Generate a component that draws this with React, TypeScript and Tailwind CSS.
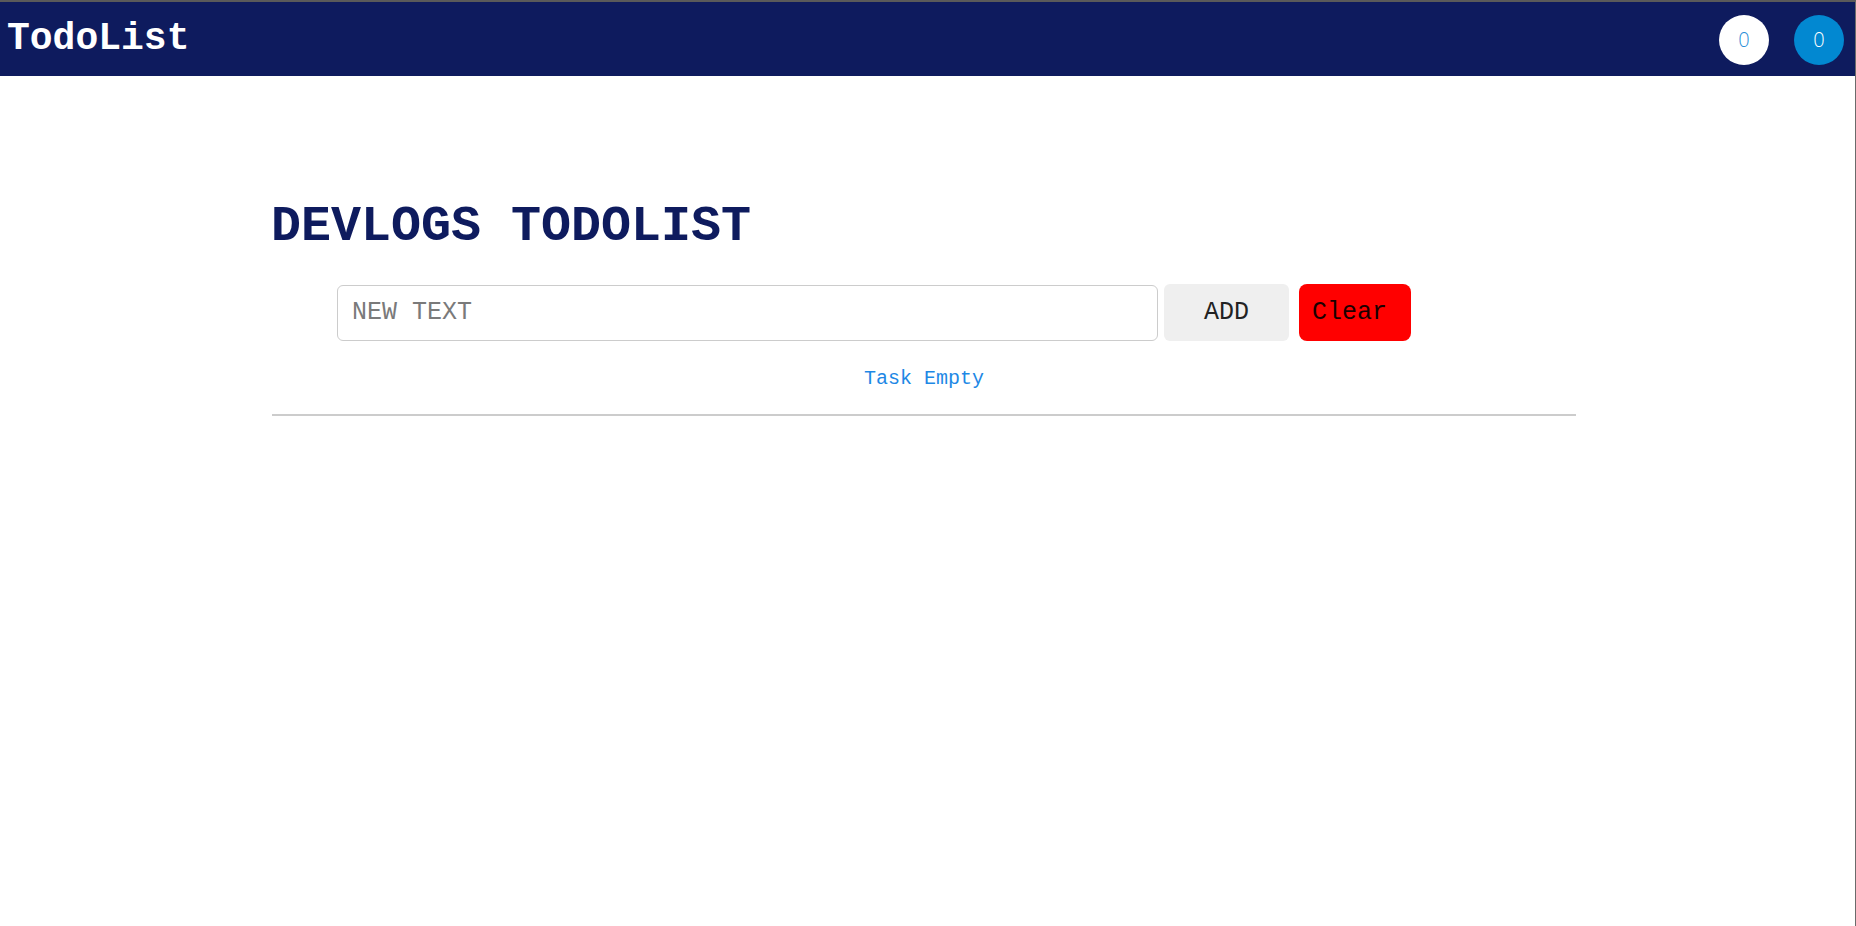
import { JSX, useState } from "react";

const mono = "font-['Courier_New','Liberation_Mono',monospace]";

export default function App(): JSX.Element {
  const [text, setText] = useState<string>("");
  const [tasks, setTasks] = useState<string[]>([]);
  const done = 0;

  const handleAdd = () => {
    if (!text.trim()) return;
    setTasks([...tasks, text.trim()]);
    setText("");
  };

  return (
    <div className="min-h-screen bg-white border-t-2 border-t-[#5a5a5a] border-r border-r-[#6b6b6b]">
      {/* 상단 네비게이션 */}
      <nav className="h-[74px] bg-[#0e1b5e] flex items-center justify-between pl-[7px] pr-[11px]">
        <h2 className={`${mono} text-[38px] font-bold text-white leading-none`}>
          TodoList
        </h2>
        <div className="flex items-center gap-[25px] mt-[2px]">
          <span className="w-[50px] h-[50px] rounded-full bg-white text-[#2b8fd8] flex items-center justify-center text-[20px] font-light font-['Open_Sans',sans-serif]">
            {done}
          </span>
          <span className="w-[50px] h-[50px] rounded-full bg-[#0288d1] text-white flex items-center justify-center text-[20px] font-light font-['Open_Sans',sans-serif]">
            {tasks.length}
          </span>
        </div>
      </nav>

      <main className="ml-[272px] w-[1304px] pt-[126px]">
        <h1 className={`${mono} text-[50px] leading-[50px] font-bold text-[#0e1b5e] -ml-[1px]`}>
          DEVLOGS TODOLIST
        </h1>

        <div className="flex items-center mt-[32px] ml-[65px]">
          <input
            autoFocus
            value={text}
            onChange={(e) => setText(e.target.value)}
            placeholder="NEW TEXT"
            className={`${mono} w-[821px] h-[56px] border border-[#cccccc] rounded-md pl-[14px] text-[25px] text-[#222] placeholder:text-[#7a7a7a] outline-none`}
          />
          <button
            onClick={handleAdd}
            className={`${mono} ml-[6px] w-[125px] h-[57px] bg-[#efefef] rounded-md text-[25px] text-[#222]`}
          >
            ADD
          </button>
          <button
            onClick={() => setTasks([])}
            className={`${mono} ml-[10px] w-[112px] h-[57px] bg-[#ff0000] rounded-lg text-[25px] text-[#1a0000] text-left pl-[13px]`}
          >
            Clear
          </button>
        </div>

        {tasks.length > 0 ? (
          <ul className="mt-[28px]">
            {tasks.map((task, i) => (
              <li key={i} className={`${mono} text-[20px] text-[#0e1b5e]`}>
                {task}
              </li>
            ))}
          </ul>
        ) : (
          <p className={`${mono} mt-[28px] text-center text-[20px] leading-[20px] text-[#1e88e5]`}>
            Task Empty
          </p>
        )}

        <hr className="mt-[25px] border-0 h-[2px] bg-[#cccccc]" />
      </main>
    </div>
  );
}
